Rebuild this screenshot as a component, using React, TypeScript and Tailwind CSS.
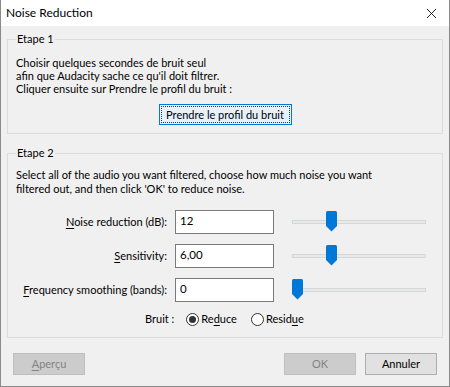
import { X } from "lucide-react";

const font = { fontFamily: 'Lato, "Liberation Sans", sans-serif' };

function Slider({ pos }: { pos: number }) {
  return (
    <div className="relative w-[134px] h-[24px] flex items-center">
      <div className="w-full h-[4px] bg-[#e7eaea] border border-[#d6d6d6]" />
      <svg
        className="absolute top-[1px]"
        style={{ left: pos }}
        width="11"
        height="21"
        viewBox="0 0 11 21"
      >
        <path d="M0 1.5 Q0 0 1.5 0 H9.5 Q11 0 11 1.5 V15 L5.5 20.5 L0 15 Z" fill="#0078d7" />
      </svg>
    </div>
  );
}

function Row({ label, u, value, pos }: { label: string; u: string; value: string; pos: number }) {
  return (
    <div className="flex items-center h-[24px]">
      <div className="w-[151px] text-right whitespace-nowrap">
        <span className="underline underline-offset-2">{u}</span>
        {label}
      </div>
      <input
        readOnly
        value={value}
        className="ml-[8px] w-[99px] h-[24px] bg-white border border-[#7a7a7a] px-[4px] pb-[3px] text-[11.5px] outline-none"
        style={font}
      />
      <div className="ml-[18px]">
        <Slider pos={pos} />
      </div>
    </div>
  );
}

function Radio({ checked }: { checked?: boolean }) {
  return (
    <span className="w-[13px] h-[13px] rounded-full border border-[#333] bg-white flex items-center justify-center">
      {checked && <span className="w-[7px] h-[7px] rounded-full bg-[#333]" />}
    </span>
  );
}

export default function App() {
  return (
    <div
      className="w-[450px] h-[387px] bg-[#f0f0f0] border-x border-b border-[#8a8a8a] text-[11px] text-black flex flex-col"
      style={font}
    >
      <div className="h-[26px] bg-white flex items-center justify-between pl-[5px] pr-[9px]">
        <span className="text-[12px]">Noise Reduction</span>
        <X size={17} strokeWidth={1.2} />
      </div>

      <div className="px-[6px]">
        <fieldset className="mt-[5px] border border-[#dcdcdc] px-[8px] pb-[8px]">
          <legend className="ml-[0px] px-[1px] leading-[16px]">Etape 1</legend>
          <div className="pt-[9px] leading-[13px] whitespace-nowrap">
            <p>Choisir quelques secondes de bruit seul</p>
            <p>afin que Audacity sache ce qu'il doit filtrer.</p>
            <p>Cliquer ensuite sur Prendre le profil du bruit :</p>
          </div>
          <div className="flex justify-center mt-[9px]">
            <button className="w-[133px] h-[21px] bg-[#e5f1fb] border border-[#0078d7] p-[1px] whitespace-nowrap">
              <span className="block w-full h-full border border-dotted border-[#333] leading-[15px]">
                Prendre le profil du bruit
              </span>
            </button>
          </div>
        </fieldset>

        <fieldset className="mt-[11px] border border-[#dcdcdc] px-[8px] pb-[6px]">
          <legend className="px-[1px] leading-[16px]">Etape 2</legend>
          <div className="pt-[7px] leading-[14px] whitespace-nowrap">
            <p>Select all of the audio you want filtered, choose how much noise you want</p>
            <p>filtered out, and then click 'OK' to reduce noise.</p>
          </div>
          <div className="mt-[14px] flex flex-col gap-[10px]">
            <Row u="N" label="oise reduction (dB):" value="12" pos={34} />
            <Row u="S" label="ensitivity:" value="6,00" pos={34} />
            <Row u="F" label="requency smoothing (bands):" value="0" pos={0} />
          </div>
          <div className="mt-[5px] h-[24px] flex items-center pl-[129px]">
            <span>Bruit :</span>
            <span className="ml-[12px] flex items-center gap-[2px]">
              <Radio checked />
              <span>
                Re<span className="underline underline-offset-2">d</span>uce
              </span>
            </span>
            <span className="ml-[14px] flex items-center gap-[2px]">
              <Radio />
              <span>
                Resid<span className="underline underline-offset-2">u</span>e
              </span>
            </span>
          </div>
        </fieldset>

        <div className="mt-[15px] flex items-center px-[6px]">
          <button className="w-[72px] h-[22px] bg-[#cccccc] border border-[#bfbfbf] text-[#838383]">
            <span className="underline underline-offset-2">A</span>perçu
          </button>
          <div className="flex-1" />
          <button className="w-[72px] h-[22px] bg-[#cccccc] border border-[#bfbfbf] text-[#838383]">
            OK
          </button>
          <button className="ml-[9px] w-[72px] h-[22px] bg-[#e1e1e1] border border-[#adadad]">
            Annuler
          </button>
        </div>
      </div>
    </div>
  );
}
